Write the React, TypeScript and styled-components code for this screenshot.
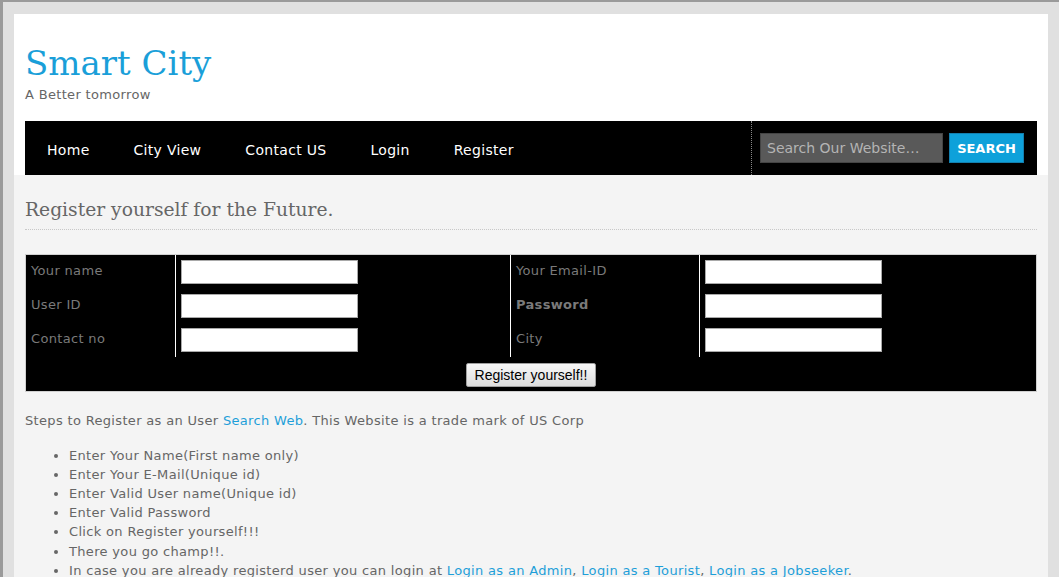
import React from "react";
import styled, { createGlobalStyle } from "styled-components";

const GlobalStyle = createGlobalStyle`
  html, body {
    margin: 0;
    padding: 0;
    background: #e0e0e0;
  }
  body {
    font-family: "DejaVu Sans", Verdana, sans-serif;
    font-size: 13px;
    letter-spacing: 0.33px;
    color: #666;
  }
`;

const navItems = ["Home", "City View", "Contact US", "Login", "Register"];

const fields: { label: string; bold?: boolean }[][] = [
  [{ label: "Your name" }, { label: "Your Email-ID" }],
  [{ label: "User ID" }, { label: "Password", bold: true }],
  [{ label: "Contact no" }, { label: "City" }],
];

const steps = [
  "Enter Your Name(First name only)",
  "Enter Your E-Mail(Unique id)",
  "Enter Valid User name(Unique id)",
  "Enter Valid Password",
  "Click on Register yourself!!!",
  "There you go champ!!.",
];

const App: React.FC = () => {
  return (
    <Frame>
      <GlobalStyle />
      <Wrapper>
        <Header>
          <Logo>Smart City</Logo>
          <Tagline>A Better tomorrow</Tagline>

          <NavBar>
            <NavLinks>
              {navItems.map((item) => (
                <NavLink key={item} href="#">
                  {item}
                </NavLink>
              ))}
            </NavLinks>
            <SearchBox>
              <SearchInput placeholder="Search Our Website…" />
              <SearchButton type="button">SEARCH</SearchButton>
            </SearchBox>
          </NavBar>
        </Header>

        <Content>
          <PageTitle>Register yourself for the Future.</PageTitle>

          <FormGrid>
            {fields.map((row, i) => (
              <React.Fragment key={i}>
                <LabelCell $bold={row[0].bold}>{row[0].label}</LabelCell>
                <InputCell>
                  <TextInput />
                </InputCell>
                <LabelCell $bold={row[1].bold}>{row[1].label}</LabelCell>
                <InputCell $last>
                  <TextInput type={row[1].bold ? "password" : "text"} />
                </InputCell>
              </React.Fragment>
            ))}
            <ButtonRow>
              <SubmitButton type="button">Register yourself!!</SubmitButton>
            </ButtonRow>
          </FormGrid>

          <Intro>
            Steps to Register as an User <A href="#">Search Web</A>. This Website is a
            trade mark of US Corp
          </Intro>

          <Steps>
            {steps.map((s) => (
              <li key={s}>{s}</li>
            ))}
            <li>
              In case you are already registerd user you can login at{" "}
              <A href="#">Login as an Admin</A>, <A href="#">Login as a Tourist</A>,{" "}
              <A href="#">Login as a Jobseeker</A>.
            </li>
          </Steps>
        </Content>
      </Wrapper>
    </Frame>
  );
};

export default App;

// page frame
const Frame = styled.div`
  min-height: 100vh;
  box-sizing: border-box;
  border-top: 2px solid #9a9a9a;
  border-left: 3px solid #9a9a9a;
  padding: 12px 11px 0 11px;
  background: #e0e0e0;
`;

const Wrapper = styled.div`
  background: #f4f4f4;
  min-height: calc(100vh - 14px);
`;

// header
const Header = styled.header`
  background: #fff;
  padding: 29px 11px 0;
`;

const Logo = styled.h1`
  margin: 0;
  font-family: "DejaVu Serif", Georgia, serif;
  font-weight: normal;
  font-size: 34px;
  line-height: 40px;
  letter-spacing: 0;
  color: #1a9fd9;
`;

const Tagline = styled.div`
  margin-top: 4px;
  font-size: 13px;
  line-height: 16px;
  color: #666;
`;

const NavBar = styled.nav`
  display: flex;
  align-items: stretch;
  justify-content: space-between;
  height: 54px;
  margin-top: 18px;
  background: #000;
`;

const NavLinks = styled.div`
  display: flex;
  align-items: center;
  padding-top: 3px;
`;

const NavLink = styled.a`
  padding: 0 22px;
  font-size: 14px;
  letter-spacing: 0.3px;
  color: #fff;
  text-decoration: none;
`;

const SearchBox = styled.div`
  display: flex;
  align-items: center;
  gap: 6px;
  padding: 0 13px 0 8px;
  border-left: 1px dotted #888;
`;

const SearchInput = styled.input`
  box-sizing: border-box;
  width: 183px;
  height: 30px;
  padding: 0 6px;
  border: 1px solid #444;
  background: #595959;
  color: #ccc;
  font-family: "DejaVu Sans", Verdana, sans-serif;
  font-size: 14px;
  outline: none;

  &::placeholder {
    color: #b4b4b4;
  }
`;

const SearchButton = styled.button`
  box-sizing: border-box;
  width: 75px;
  height: 30px;
  padding: 0;
  border: 1px solid #137fae;
  background: #0ea1da;
  color: #fff;
  font-family: "DejaVu Sans", Verdana, sans-serif;
  font-weight: bold;
  font-size: 13px;
  cursor: pointer;
`;

// content
const Content = styled.main`
  padding: 22px 11px 10px;
`;

const PageTitle = styled.h2`
  margin: 0;
  padding-bottom: 6px;
  border-bottom: 1px dotted #c8c8c8;
  font-family: "DejaVu Serif", Georgia, serif;
  font-weight: normal;
  font-size: 18.7px;
  line-height: 26px;
  letter-spacing: 0;
  color: #666;
`;

const FormGrid = styled.div`
  display: grid;
  grid-template-columns: 150px 335px 189px 1fr;
  grid-auto-rows: 34px;
  margin-top: 24px;
  border: 1px solid #d0d0d0;
  background: #000;
`;

const LabelCell = styled.div<{ $bold?: boolean }>`
  display: flex;
  align-items: center;
  padding: 0 5px 3px;
  border-right: 1px solid #fff;
  color: #7a7a7a;
  font-size: 13px;
  font-weight: ${(p) => (p.$bold ? "bold" : "normal")};
`;

const InputCell = styled.div<{ $last?: boolean }>`
  padding: 5px 0 0 5px;
  border-right: ${(p) => (p.$last ? "none" : "1px solid #fff")};
`;

const TextInput = styled.input`
  box-sizing: border-box;
  display: block;
  width: 177px;
  height: 24px;
  margin: 0;
  border: 1px solid #a9a9a9;
  background: #fff;
`;

const ButtonRow = styled.div`
  grid-column: 1 / -1;
  display: flex;
  justify-content: center;
  padding-top: 6px;
  height: 36px;
  box-sizing: border-box;
`;

const SubmitButton = styled.button`
  height: 24px;
  padding: 0 8px;
  border: 1px solid #a0a0a0;
  border-radius: 2px;
  background: linear-gradient(#f8f8f8, #dddddd);
  color: #000;
  font-family: "Liberation Sans", Arial, sans-serif;
  font-size: 14px;
  letter-spacing: 0;
`;

const Intro = styled.p`
  margin: 19px 0 0;
  font-size: 13px;
  line-height: 19.5px;
  color: #666;
`;

const Steps = styled.ul`
  margin: 15px 0 0;
  padding-left: 44px;
  font-size: 13px;
  line-height: 19.2px;
  color: #666;
`;

const A = styled.a`
  color: #1e9fd9;
  text-decoration: none;
`;
